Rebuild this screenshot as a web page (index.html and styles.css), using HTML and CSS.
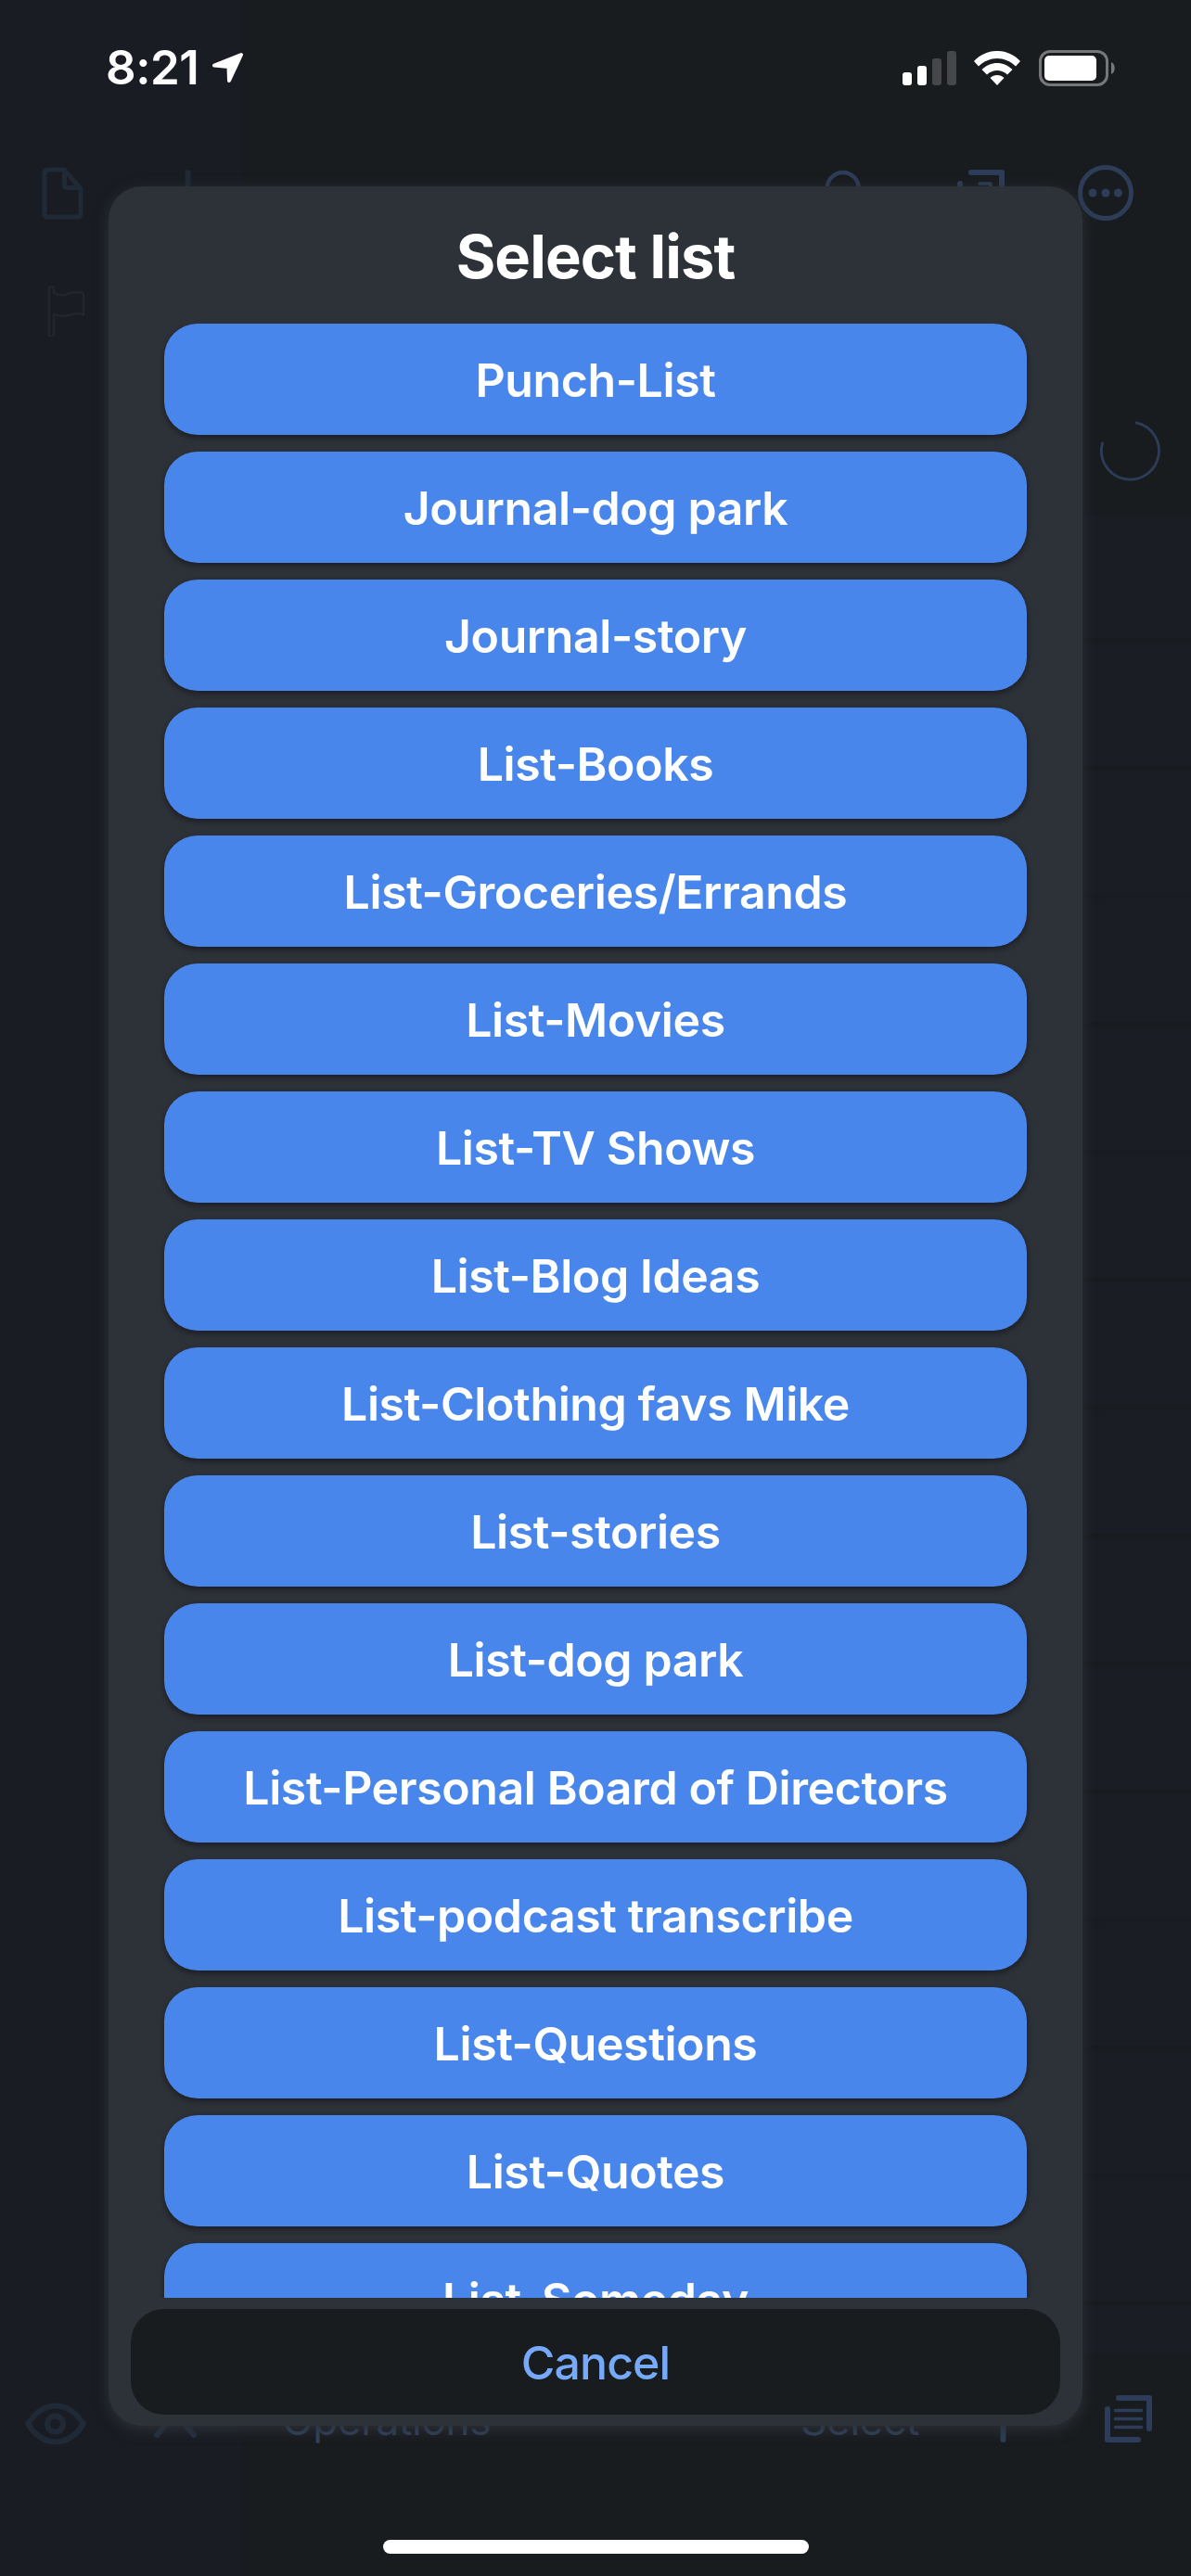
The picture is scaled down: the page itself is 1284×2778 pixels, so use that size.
FILE: index.html
```html
<!DOCTYPE html>
<html lang="en">
<head>
<meta charset="utf-8">
<title>Select list</title>
<link rel="stylesheet" href="styles.css">
</head>
<body>
<div class="screen">
  <div class="app">
    <aside class="sidebar">
      <div class="toolbar toolbar-side">
        <svg class="icon" viewBox="0 0 60 60"><path d="M31.500 5H13a3 3 0 0 0-3 3v45a3 3 0 0 0 3 3h33a3 3 0 0 0 3-3V26zM31.500 5v16.500a3 3 0 0 0 3 3H48"/></svg>
        <svg class="icon icon-plus" viewBox="0 0 60 60"><path d="M29.500 8v44M8 30h44"/></svg>
      </div>
      <div class="flag-row">
        <svg class="icon icon-flag" viewBox="0 0 60 60"><path d="M15 8.500c0-3 5-3 5 0v4c8 5 14 2 18 .5 5-1.500 8-1.500 14 .5v23c-5-2-9-1.500-14 0-7 2-11 2-18-1v22c0 3-5 3-5 0z"/></svg>
      </div>
      <div class="toolbar toolbar-foot-side">
        <svg class="icon icon-eye" viewBox="0 0 66 60"><path d="M3 36C20 10 46 10 63 36C46 62 20 62 3 36z"/><circle cx="32.500" cy="36" r="8.500"/></svg>
        <svg class="icon icon-chevron" viewBox="0 0 60 60"><path d="M10 48L30 24L50 48"/></svg>
      </div>
    </aside>
    <main class="main">
      <div class="toolbar toolbar-main">
        <svg class="icon icon-search" viewBox="0 0 60 60"><circle cx="29.700" cy="25" r="17"/><path d="M42 37L56 52"/></svg>
        <svg class="icon icon-share" viewBox="0 0 60 60"><path d="M20 8h33v33M8 20v33h33"/><path class="thin" d="M29 20h12v12"/></svg>
        <svg class="icon icon-more" viewBox="0 0 60 60"><circle cx="30" cy="30" r="27.500"/><g class="solid"><circle cx="16" cy="30" r="4.500"/><circle cx="30" cy="30" r="4.500"/><circle cx="43.500" cy="30" r="4.500"/></g></svg>
      </div>
      <div class="loading">
        <svg class="icon spinner" viewBox="0 0 66 66"><path d="M40 2.800A31 31 0 1 1 3.500 25"/></svg>
      </div>
      <div class="rows">
        <div class="row"></div><div class="row"></div><div class="row"></div><div class="row"></div><div class="row"></div>
        <div class="row"></div><div class="row"></div><div class="row"></div><div class="row"></div><div class="row"></div>
        <div class="row"></div><div class="row"></div><div class="row"></div><div class="row"></div>
      </div>
      <div class="toolbar toolbar-foot-main">
        <span class="action operations">Operations</span>
        <span class="action select">Select</span>
        <svg class="icon icon-add" viewBox="0 0 60 60"><path d="M30.500 9v44M9 30h43"/></svg>
        <svg class="icon icon-list" viewBox="0 0 60 60"><path d="M19 8h33v33M7 20v33h33"/><path class="thin" d="M15.500 21.500h28M15.500 30.500h28M15.500 39.500h28"/></svg>
      </div>
    </main>
  </div>

  <div class="status">
    <span class="time">8:21</span>
    <svg class="location" viewBox="0 0 36 36"><path d="M32 3L3 14.500L18.500 16L19 31z"/></svg>
    <svg class="signal" viewBox="0 0 58 38"><rect x="0" y="23" width="10" height="14" rx="3"/><rect x="16" y="16" width="10" height="21" rx="3"/><rect class="off" x="32" y="8" width="10" height="29" rx="3"/><rect class="off" x="48" y="0" width="10" height="37" rx="3"/></svg>
    <svg class="wifi" viewBox="0 0 52 38"><path d="M1 11C15-3.700 37-3.700 51 11.000L46 16.500C34.500 5 17.500 5 6 16.500z"/><path d="M9.500 20C19 10.500 33 10.500 42.500 20L37 25.500C31 19.500 21 19.500 15 25.500z"/><path d="M18.500 29C22.500 25 29.500 25 33.500 29L26 37.000z"/></svg>
    <svg class="battery" viewBox="0 0 84 40"><rect class="shell" x="1.500" y="1.500" width="72" height="36" rx="10.500"/><rect x="6" y="6" width="56" height="27" rx="5"/><path class="nub" d="M78 13c5 2 5 11 0 13z"/></svg>
  </div>

  <section class="dialog">
    <h1 class="title">Select list</h1>
    <div class="options">
      <button class="option">Punch-List</button>
      <button class="option">Journal-dog park</button>
      <button class="option">Journal-story</button>
      <button class="option">List-Books</button>
      <button class="option">List-Groceries/Errands</button>
      <button class="option">List-Movies</button>
      <button class="option">List-TV Shows</button>
      <button class="option">List-Blog Ideas</button>
      <button class="option">List-Clothing favs Mike</button>
      <button class="option">List-stories</button>
      <button class="option">List-dog park</button>
      <button class="option">List-Personal Board of Directors</button>
      <button class="option">List-podcast transcribe</button>
      <button class="option">List-Questions</button>
      <button class="option">List-Quotes</button>
      <button class="option">List-Someday</button>
    </div>
    <button class="cancel">Cancel</button>
  </section>

  <div class="home-indicator"></div>
</div>
</body>
</html>
```
FILE: styles.css
```css
* { box-sizing: border-box; }
body { margin: 0; background: #191c1f; font-family: Inter, "Liberation Sans", sans-serif; }
button { font: inherit; border: 0; padding: 0; margin: 0; }
svg { display: block; flex: none; }

.screen { position: relative; width: 1284px; height: 2778px; overflow: hidden; }

.app { display: grid; grid-template-columns: 259px 1fr; height: 100%; }
.sidebar, .main { display: flex; flex-direction: column; padding-top: 178px; padding-bottom: 140px; }
.sidebar { background: #191c23; color: #1f2a36; }
.main { background: #191c1f; color: #2d3d59; }

.toolbar { display: flex; align-items: center; height: 60px; flex: none; }
.toolbar-side { padding-left: 38px; gap: 75px; }
.toolbar-main { justify-content: flex-end; padding-right: 62px; }
.toolbar-foot-side { margin-top: auto; padding-left: 27px; gap: 66px; }
.toolbar-foot-main { margin-top: auto; padding-left: 45px; padding-right: 37px; }

.icon { width: 60px; height: 60px; fill: none; stroke: currentColor; stroke-width: 5; stroke-linecap: round; stroke-linejoin: round; }
.icon .thin { stroke-width: 3.500px; }
.icon .solid { fill: currentColor; stroke: none; }
.icon-plus, .icon-share, .icon-list, .icon-add { stroke-width: 6; }
.icon-search { margin-right: 88px; stroke-width: 4.500; }
.icon-share { margin-right: 75px; }
.icon-eye { width: 66px; stroke-width: 6; }
.icon-chevron { stroke-width: 6; color: #243040; }
.icon-flag { color: #22252d; stroke-width: 2.500; }
.flag-row { padding: 65px 0 0 38px; }
.icon-add { margin-left: auto; margin-right: 76px; }

.loading { height: 317px; flex: none; display: flex; justify-content: flex-end; padding: 215px 33px 0 0; }
.spinner { width: 66px; height: 66px; stroke-width: 2.800; }
.rows { height: 1984px; overflow: hidden; background: #1a1d24; }
.row { height: 138px; border-bottom: 5px solid #191c1f; }

.action { font-size: 44px; line-height: 60px; position: relative; top: 2px; letter-spacing: -0.300px; color: #33435e; }
.select { margin-left: 334px; }

.status { position: absolute; inset: 0 0 auto 0; height: 147px; display: flex; align-items: center; padding-left: 114px; color: #fff; fill: #fff; }
.time { font-size: 51px; font-weight: 600; line-height: 60px; width: 101px; margin-top: -2px; white-space: nowrap; letter-spacing: -0.500px; }
.location { width: 36px; height: 36px; margin-left: 13px; stroke: #fff; stroke-width: 4; stroke-linejoin: round; }
.signal { width: 58px; height: 38px; margin-left: auto; }
.signal .off { fill: #45474b; }
.wifi { width: 52px; height: 38px; margin-left: 18px; }
.battery { width: 84px; height: 40px; margin: 0 80px 0 19px; }
.battery .shell { fill: none; stroke: #75777a; stroke-width: 3; }
.battery .nub { fill: #75777a; }

.dialog { position: absolute; left: 117px; top: 201px; width: 1050px; height: 2415px; padding-bottom: 12px; display: flex; flex-direction: column; background: #2d3138; border-radius: 36px; box-shadow: 0 4px 15px #2d3138; }
.title { margin: 0; height: 148px; padding-top: 36px; flex: none; text-align: center; font-size: 65px; line-height: 80px; font-weight: 700; color: #fff; letter-spacing: -0.900px; }
.options { height: 2129px; flex: none; overflow: hidden; display: flex; flex-direction: column; gap: 18px; padding: 0 60px; }
.option { height: 120px; flex: none; border-radius: 36px; background: #4886eb; color: #fff; font-size: 50px; font-weight: 600; line-height: 122px; text-align: center; letter-spacing: -0.400px; box-shadow: 0 3px 6px rgba(0, 0, 0, 0.4); }
.cancel { margin: auto 24px 0; height: 114px; flex: none; border-radius: 36px; background: #191c1f; color: #76a9f9; font-size: 50px; font-weight: 450; line-height: 116px; letter-spacing: -0.900px; }

.home-indicator { position: absolute; left: 413px; bottom: 24px; width: 459px; height: 15px; border-radius: 8px; background: #fff; }
```
